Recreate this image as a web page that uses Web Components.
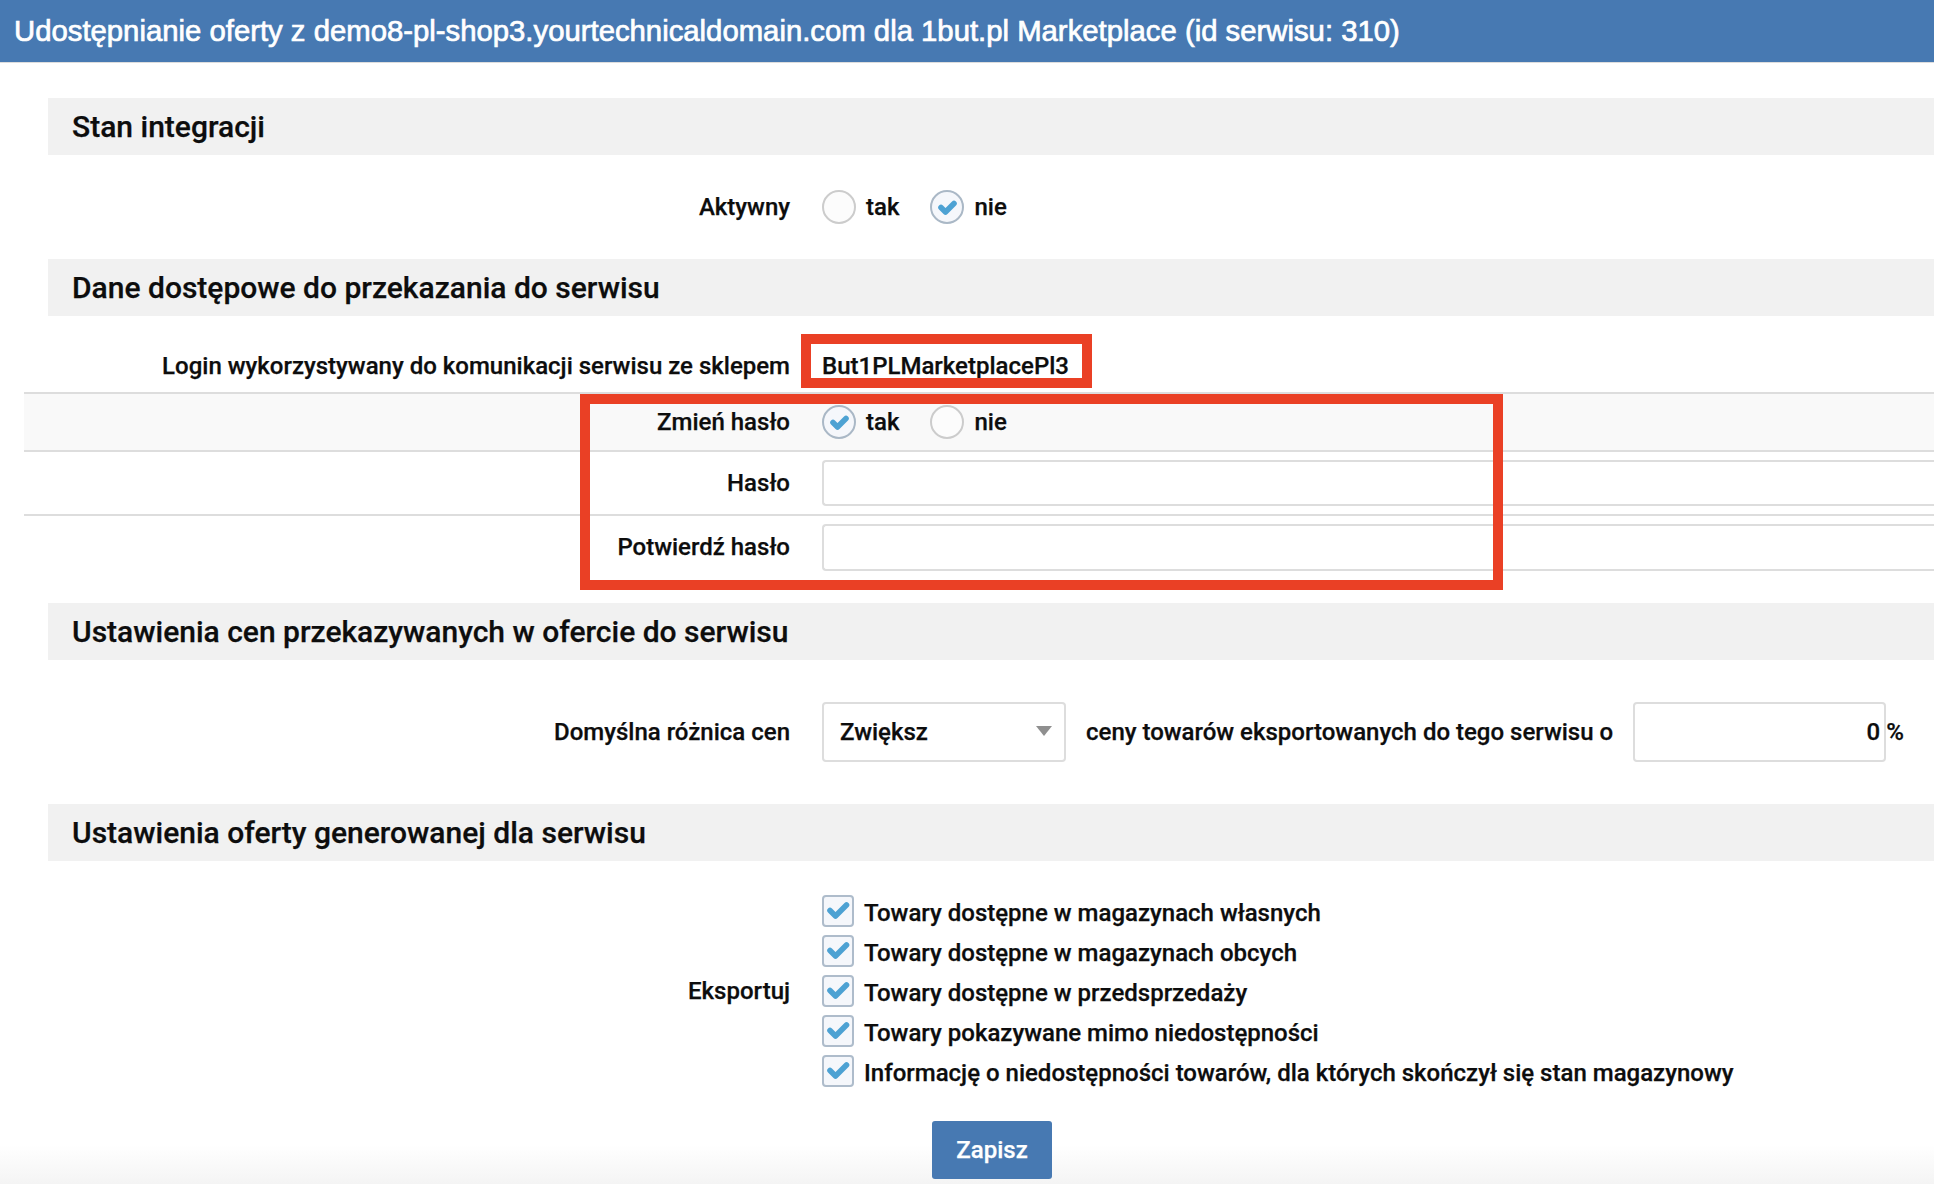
<!DOCTYPE html>
<html lang="pl">
<head>
<meta charset="utf-8">
<style>
html,body{margin:0;padding:0;background:#fff;height:1184px;overflow:hidden}
body{font:500 24px/1.2 Roboto,"Liberation Sans",sans-serif;color:#0d0d0d;-webkit-text-stroke:.25px currentColor;
  background:linear-gradient(to bottom,#fff 0,#fff 1145px,#f4f4f4 1184px)}
#form{display:block;position:relative;padding-top:36px}
.check-list{display:flex;flex-direction:column;gap:8px}
</style>
</head>
<body>
<page-header>Udostępnianie oferty z demo8-pl-shop3.yourtechnicaldomain.com dla 1but.pl Marketplace (id serwisu: 310)</page-header>
<div id="form">
  <form-section>Stan integracji</form-section>
  <form-row label="Aktywny" style="height:104px">
    <radio-box>tak</radio-box><radio-box checked>nie</radio-box>
  </form-row>
  <form-section>Dane dostępowe do przekazania do serwisu</form-section>
  <form-row label="Login wykorzystywany do komunikacji serwisu ze sklepem" style="height:76px;padding-top:24px;box-sizing:border-box">
    <span>But1PLMarketplacePl3</span>
  </form-row>
  <table-row label="Zmień hasło" shaded style="height:58px">
    <radio-box checked>tak</radio-box><radio-box>nie</radio-box>
  </table-row>
  <table-row label="Hasło" style="padding:8px 0"><text-box wide></text-box></table-row>
  <table-row label="Potwierdź hasło" style="padding:8px 0 32px"><text-box wide style="height:47px"></text-box></table-row>
  <form-section>Ustawienia cen przekazywanych w ofercie do serwisu</form-section>
  <form-row label="Domyślna różnica cen" style="height:144px">
    <select-box>Zwiększ</select-box>
    <span style="margin-left:20px">ceny towarów eksportowanych do tego serwisu o</span>
    <text-box value="0" style="margin-left:20px"></text-box>
    <span style="margin-left:0;font-size:24px">%</span>
  </form-row>
  <form-section>Ustawienia oferty generowanej dla serwisu</form-section>
  <form-row label="Eksportuj" style="height:260px">
    <div class="check-list">
      <check-box>Towary dostępne w magazynach własnych</check-box>
      <check-box>Towary dostępne w magazynach obcych</check-box>
      <check-box>Towary dostępne w przedsprzedaży</check-box>
      <check-box>Towary pokazywane mimo niedostępności</check-box>
      <check-box>Informację o niedostępności towarów, dla których skończył się stan magazynowy</check-box>
    </div>
  </form-row>
  <div style="padding-left:932px"><primary-button>Zapisz</primary-button></div>
  <red-frame style="left:801px;top:272px;width:291px;height:54px"></red-frame>
  <red-frame style="left:580px;top:332px;width:923px;height:196px"></red-frame>
</div>
<script>
function def(name, html, init){
  customElements.define(name, class extends HTMLElement{
    constructor(){super();const s=this.attachShadow({mode:'open'});s.innerHTML=html;if(init)init(this,s);}
    connectedCallback(){if(this.update)this.update();}
  });
}
def('page-header',`<style>:host{display:block;height:62px;background:#4779b2;box-shadow:0 1px 0 #ddd;color:#fff;
  font:400 29.3px/62px "Liberation Sans",Arial,sans-serif;padding-left:14px;white-space:nowrap;box-sizing:border-box;-webkit-text-stroke:.7px #fff}</style><slot></slot>`);
def('form-section',`<style>:host{display:flex;align-items:center;height:57px;margin-left:48px;padding-left:24px;background:#f1f1f1;
  font:500 30px/1 Roboto,sans-serif;color:#0d0d0d}</style><slot></slot>`);
const rowCss=`:host{display:grid;grid-template-columns:790px 1fr;column-gap:32px;align-items:center}
  .l{text-align:right;white-space:nowrap}
  .c{display:flex;align-items:center;white-space:nowrap;min-width:0}`;
function labelInit(el,s){
  el.update=()=>{s.querySelector('.l').textContent=el.getAttribute('label')||'';};}
def('form-row',`<style>${rowCss}</style><div class="l"></div><div class="c"><slot></slot></div>`,labelInit);
def('table-row',`<style>${rowCss}
  :host{margin-left:24px;grid-template-columns:766px 1fr;border-top:2px solid #ddd;box-sizing:border-box}
  :host([shaded]){background:#f9f9f9}</style><div class="l"></div><div class="c"><slot></slot></div>`,labelInit);
def('radio-box',`<style>:host{display:inline-flex;align-items:center;margin-right:31px}
  svg{width:34px;height:34px;display:block;margin-right:10px}.t{display:none}:host([checked]) .t{display:block}
  :host([checked]) circle{stroke:#aab8c6;fill:#f5f7fb}</style>
  <svg viewBox="0 0 34 34"><circle cx="17" cy="17" r="16" fill="#fcfcfc" stroke="#cccccc" stroke-width="2"/>
  <path class="t" d="M11 17.5l4.5 4.5 8.5-8.5" fill="none" stroke="#4da2d3" stroke-width="5.6" stroke-linejoin="round" stroke-linecap="round"/></svg><slot></slot>`);
def('check-box',`<style>:host{display:flex;align-items:center;height:32px;white-space:nowrap}
  svg{width:32px;height:32px;display:block;margin-right:11px;margin-left:0;flex:none}
  span{position:relative;top:2px;left:-1px}</style>
  <svg viewBox="0 0 32 32"><rect x="1" y="1" width="30" height="30" rx="3" fill="#f5f7fb" stroke="#aebccb" stroke-width="2"/>
  <path d="M8 15.5l5.5 5.5 11-11" fill="none" stroke="#4da2d3" stroke-width="5.6" stroke-linejoin="round" stroke-linecap="round"/></svg><span><slot></slot></span>`);
def('text-box',`<style>:host{display:block;box-sizing:border-box;height:60px;width:253px;border:2px solid #ddd;border-radius:4px;background:#fff;
  line-height:56px;text-align:right;padding-right:4px}
  :host([wide]){flex:1;width:auto;height:46px;line-height:42px;border-right:0;border-radius:4px 0 0 4px}</style><span></span>`,(el,s)=>{el.update=()=>{s.querySelector('span').textContent=el.getAttribute('value')||'';};});
def('select-box',`<style>:host{display:flex;position:relative;align-items:center;box-sizing:border-box;height:60px;width:244px;border:2px solid #ddd;border-radius:4px;background:#fff;padding-left:16px}
  svg{position:absolute;right:12px;top:22px;width:16px;height:10px}</style><slot></slot><svg viewBox="0 0 16 10"><path d="M0 0h16l-8 10z" fill="#8f8f8f"/></svg>`);
def('primary-button',`<style>:host{display:inline-flex;align-items:center;justify-content:center;width:120px;height:58px;background:#4779b2;border-radius:3px;color:#fff;font-weight:500}</style><slot></slot>`);
def('red-frame',`<style>:host{position:absolute;display:block;box-sizing:border-box;border:10px solid #ea4025}</style>`);
</script>
</body>
</html>
